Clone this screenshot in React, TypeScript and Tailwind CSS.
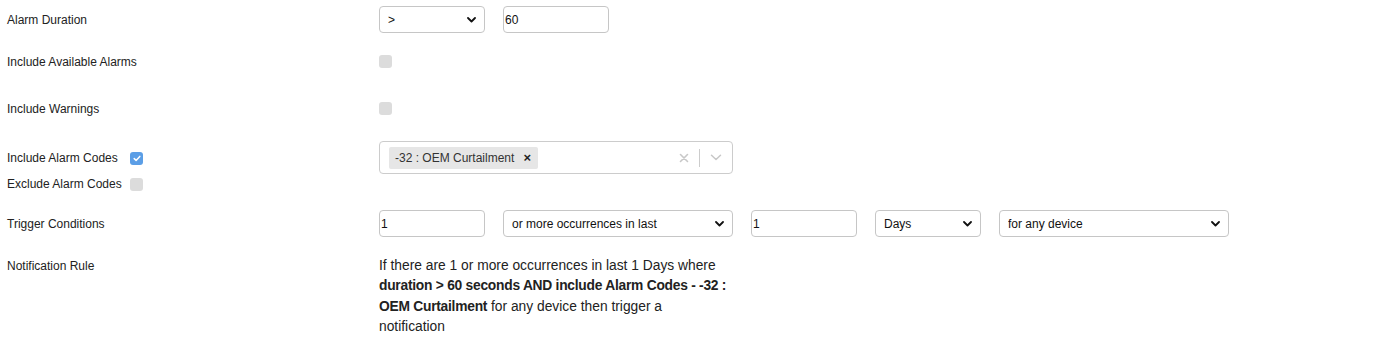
import React from 'react';

const Chevron = () => (
  <svg className="pointer-events-none absolute right-[9px] top-1/2 -translate-y-1/2" width="9" height="6" viewBox="0 0 9 6">
    <path d="M1 1l3.5 3.5L8 1" fill="none" stroke="#111" strokeWidth="1.8" strokeLinecap="round" strokeLinejoin="round" />
  </svg>
);

const Select = ({ value, w }: { value: string; w: string }) => (
  <div className={`relative ${w} h-[27px]`}>
    <select
      defaultValue={value}
      className="w-full h-full appearance-none rounded-[4px] border border-[#c6c6c6] bg-white pl-2 pr-6 text-[12px] text-[#111] outline-none"
    >
      <option>{value}</option>
    </select>
    <Chevron />
  </div>
);

const TextInput = ({ value, w }: { value: string; w: string }) => (
  <input
    defaultValue={value}
    className={`${w} h-[27px] rounded-[4px] border border-[#c6c6c6] bg-white pl-[1px] text-[12px] text-[#111] outline-none`}
  />
);

const Checkbox = ({ checked = false }: { checked?: boolean }) =>
  checked ? (
    <span className="flex h-[13px] w-[13px] items-center justify-center rounded-[3px] bg-[#5b9ee6]">
      <svg width="8" height="7" viewBox="0 0 8 7">
        <path d="M1.2 3.6l1.9 1.8L6.8 1.4" fill="none" stroke="#fff" strokeWidth="1.5" strokeLinecap="round" strokeLinejoin="round" />
      </svg>
    </span>
  ) : (
    <span className="block h-[13px] w-[13px] rounded-[3px] bg-[#dcdcdc]" />
  );

const Label = ({ children }: { children: React.ReactNode }) => (
  <div className="w-[379px] shrink-0 pl-[7px] text-[12px] text-[#222]">{children}</div>
);

export default function App() {
  return (
    <div className="min-h-[353px] bg-white pt-[6px] font-['Liberation_Sans',Arial,sans-serif] text-[#222]">
      {/* Alarm Duration */}
      <div className="flex h-[27px] items-center">
        <Label>Alarm Duration</Label>
        <div className="flex gap-[18px]">
          <Select value=">" w="w-[106px]" />
          <TextInput value="60" w="w-[106px]" />
        </div>
      </div>

      {/* Include Available Alarms */}
      <div className="mt-[22px] flex h-[13px] items-center">
        <Label>Include Available Alarms</Label>
        <Checkbox />
      </div>

      {/* Include Warnings */}
      <div className="mt-[34px] flex h-[13px] items-center">
        <Label>Include Warnings</Label>
        <Checkbox />
      </div>

      {/* Alarm codes */}
      <div className="mt-[26px] flex">
        <div className="w-[379px] shrink-0 pl-[7px] text-[12px] text-[#222]">
          <div className="flex h-[33px] items-center pt-[1px]">
            <span className="w-[123px]">Include Alarm Codes</span>
            <Checkbox checked />
          </div>
          <div className="mt-[3px] flex h-[13px] items-center pt-[1px]">
            <span className="w-[123px]">Exclude Alarm Codes</span>
            <Checkbox />
          </div>
        </div>
        <div className="flex h-[33px] w-[354px] items-center rounded-[4px] border border-[#cccccc] bg-white">
          <div className="flex flex-1 items-center pl-[9px]">
            <div className="flex h-[22px] items-center rounded-[2px] bg-[#e6e6e6] pl-[6px] pr-[7px] text-[12px] text-[#333]">
              <span>-32 : OEM Curtailment</span>
              <span className="ml-[9px] text-[13px] font-bold leading-none text-[#222]">×</span>
            </div>
          </div>
          <div className="flex items-center pr-[10px]">
            <svg width="10" height="10" viewBox="0 0 10 10" className="mr-[10px]">
              <path d="M1.5 1.5l7 7M8.5 1.5l-7 7" stroke="#c8c8c8" strokeWidth="1.6" strokeLinecap="round" />
            </svg>
            <span className="h-[18px] w-px bg-[#cccccc]" />
            <svg width="12" height="7" viewBox="0 0 12 7" className="ml-[10px]">
              <path d="M1.5 1.2l4.5 4.3 4.5-4.3" fill="none" stroke="#c8c8c8" strokeWidth="1.5" strokeLinecap="round" strokeLinejoin="round" />
            </svg>
          </div>
        </div>
      </div>

      {/* Trigger Conditions */}
      <div className="mt-[20px] flex h-[27px] items-center">
        <Label>Trigger Conditions</Label>
        <div className="flex gap-[18px]">
          <TextInput value="1" w="w-[106px]" />
          <Select value="or more occurrences in last" w="w-[230px]" />
          <TextInput value="1" w="w-[106px]" />
          <Select value="Days" w="w-[106px]" />
          <Select value="for any device" w="w-[230px]" />
        </div>
      </div>

      {/* Notification Rule */}
      <div className="mt-[19px] flex">
        <div className="w-[379px] shrink-0 pl-[7px] text-[12px] leading-[20px] text-[#222]">Notification Rule</div>
        <p className="w-[350px] text-[13.8px] leading-[20.3px] text-[#222]">
          If there are 1 or more occurrences in last 1 Days where{' '}
          <span className="font-semibold tracking-[-0.25px]">duration &gt; 60 seconds AND include Alarm Codes - -32 : OEM Curtailment</span>{' '}
          for any device then trigger a notification
        </p>
      </div>
    </div>
  );
}
